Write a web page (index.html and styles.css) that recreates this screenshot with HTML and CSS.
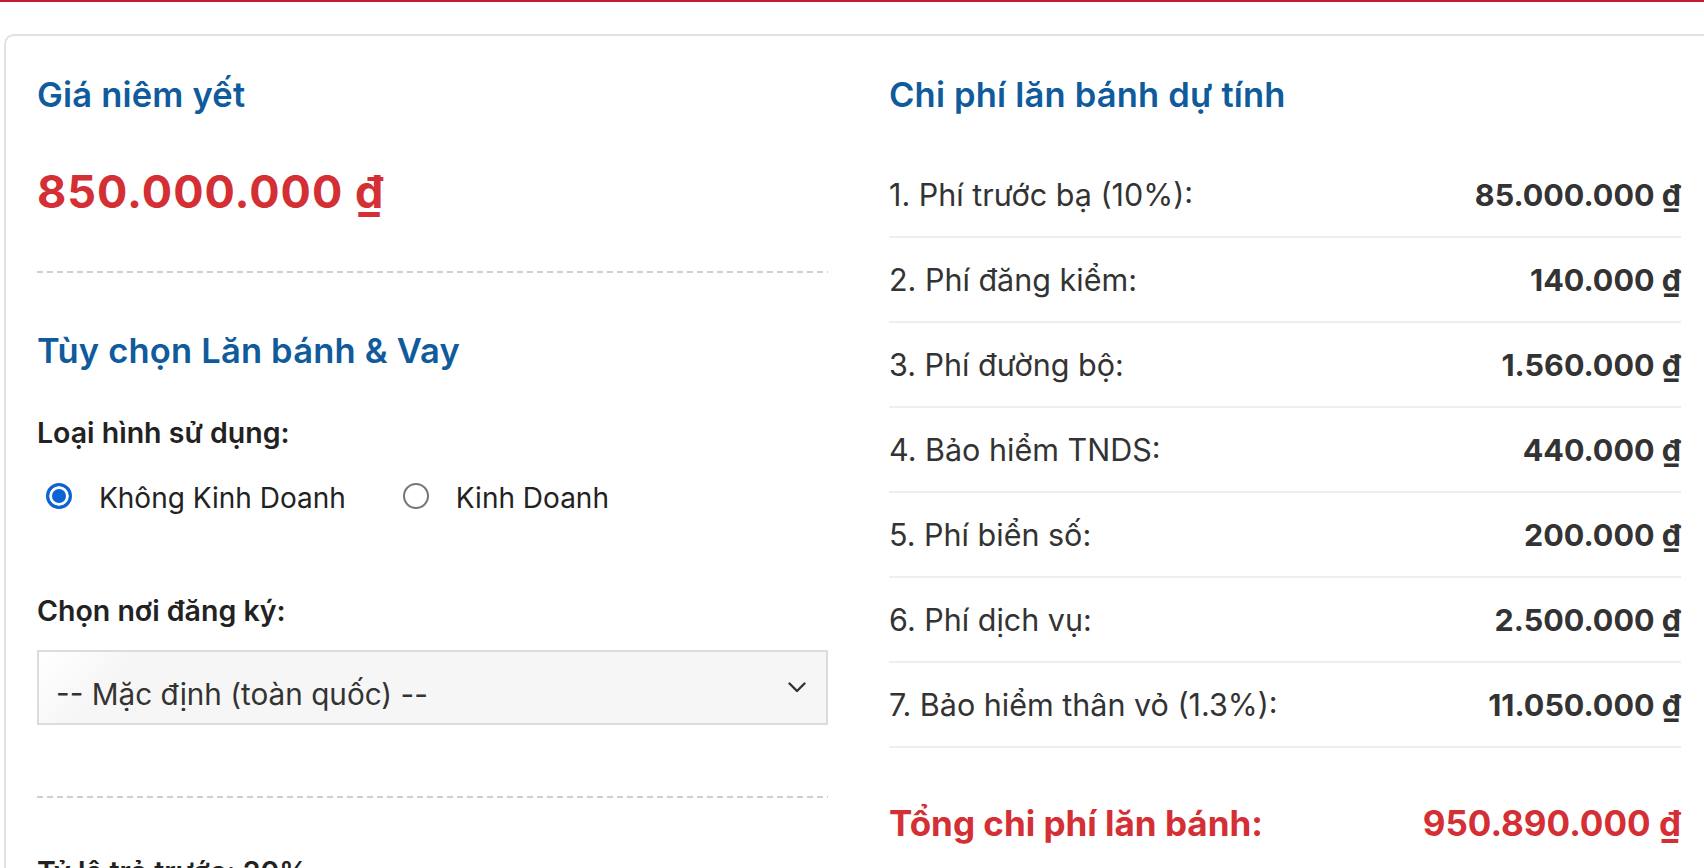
FILE: index.html
```html
<!DOCTYPE html>
<html lang="vi">
<head>
<meta charset="utf-8">
<title>Dự toán chi phí lăn bánh</title>
<link rel="stylesheet" href="styles.css">
</head>
<body>
<div class="topbar"></div>
<main class="card">
  <section class="col">
    <h2 class="title">Giá niêm yết</h2>
    <div class="price">850.000.000 ₫</div>
    <hr class="dash">
    <h2 class="title t2">Tùy chọn Lăn bánh &amp; Vay</h2>
    <p class="label">Loại hình sử dụng:</p>
    <div class="radios">
      <label class="radio"><input type="radio" name="use" checked><span>Không Kinh Doanh</span></label>
      <label class="radio"><input type="radio" name="use"><span>Kinh Doanh</span></label>
    </div>
    <p class="label l2">Chọn nơi đăng ký:</p>
    <div class="select-wrap">
      <select class="select"><option>-- Mặc định (toàn quốc) --</option></select>
      <svg class="chev" width="18" height="11" viewBox="0 0 18 11"><path d="M1.5 1.5 L9 9 L16.5 1.5" fill="none" stroke="#333" stroke-width="2.4" stroke-linecap="round" stroke-linejoin="round"/></svg>
    </div>
    <hr class="dash d2">
    <p class="label l3">Tỷ lệ trả trước: 20%</p>
  </section>
  <section class="col">
    <h2 class="title">Chi phí lăn bánh dự tính</h2>
    <ul class="fees">
      <li><span>1. Phí trước bạ (10%):</span><b>85.000.000 ₫</b></li>
      <li><span>2. Phí đăng kiểm:</span><b>140.000 ₫</b></li>
      <li><span>3. Phí đường bộ:</span><b>1.560.000 ₫</b></li>
      <li><span>4. Bảo hiểm TNDS:</span><b>440.000 ₫</b></li>
      <li><span>5. Phí biển số:</span><b>200.000 ₫</b></li>
      <li><span>6. Phí dịch vụ:</span><b>2.500.000 ₫</b></li>
      <li><span>7. Bảo hiểm thân vỏ (1.3%):</span><b>11.050.000 ₫</b></li>
    </ul>
    <div class="total"><span>Tổng chi phí lăn bánh:</span><span>950.890.000 ₫</span></div>
  </section>
</main>
</body>
</html>
```

FILE: styles.css
```css
html, body {
  margin: 0;
  padding: 0;
  background: #fff;
  overflow: hidden;
}
body {
  font-family: Inter, "Noto Sans", "Liberation Sans", sans-serif;
  color: #333;
}
.topbar {
  height: 2px;
  background: #c41a33;
}
.card {
  margin: 32px 0 0 4px;
  width: 1644px;
  padding: 40px 31px;
  border: 2px solid #e2e2e2;
  border-radius: 10px;
  display: grid;
  grid-template-columns: 791px 792px;
  column-gap: 61px;
  align-items: start;
}
.col {
  min-width: 0;
}
.title {
  margin: 2px 0 0;
  font-weight: 600;
  font-size: 34.5px;
  line-height: 33px;
  letter-spacing: 0.2px;
  color: #0f5b9c;
}
.price {
  margin-top: 54px;
  font-weight: 700;
  font-size: 45px;
  line-height: 54px;
  color: #d32f34;
  letter-spacing: 1px;
}
.dash {
  margin: 52px 0 0;
  border: 0;
  height: 2px;
  background: repeating-linear-gradient(to right, #cfcfcf 0 6px, transparent 6px 10px);
}
.t2 {
  margin-top: 61px;
}
.label {
  margin: 44px 0 0;
  font-weight: 600;
  font-size: 28.5px;
  line-height: 43.5px;
  color: #222;
}
.radios {
  display: flex;
  gap: 48px;
  margin-top: 22px;
  font-size: 28px;
  line-height: 43.5px;
  color: #222;
}
.radio {
  display: flex;
  align-items: center;
  gap: 27px;
}
.radio input {
  appearance: none;
  -webkit-appearance: none;
  width: 26px;
  height: 26px;
  margin: 0 0 4px 9px;
  border: 2px solid #767676;
  border-radius: 50%;
  background: #fff;
  box-sizing: border-box;
}
.radio input:checked {
  border: 3px solid #0d63d4;
  background: #0d63d4;
  box-shadow: inset 0 0 0 3px #fff;
}
.l2 {
  margin-top: 69px;
}
.select-wrap {
  position: relative;
  margin-top: 17px;
  height: 75px;
}
.select {
  appearance: none;
  -webkit-appearance: none;
  display: block;
  width: 100%;
  height: 75px;
  box-sizing: border-box;
  border: 2px solid #dcdcdc;
  border-radius: 0;
  background: linear-gradient(135deg, #ffffff 0%, #f6f6f6 12%, #f6f6f6 100%);
  font-family: Inter, "Noto Sans", sans-serif;
  font-size: 29.7px;
  color: #333;
  padding: 14px 17px 0 17px;
  outline: none;
}
.chev {
  position: absolute;
  right: 22px;
  top: 32px;
  pointer-events: none;
}
.d2 {
  margin-top: 71px;
}
.l3 {
  margin-top: 52px;
}
.fees {
  list-style: none;
  margin: 42px 0 0;
  padding: 0;
}
.fees li {
  display: flex;
  justify-content: space-between;
  padding: 20.5px 0;
  line-height: 42px;
  font-size: 30.5px;
  border-bottom: 2px solid #eeeeee;
  color: #333;
}
.fees b {
  font-weight: 700;
  color: #333;
}
.total {
  display: flex;
  justify-content: space-between;
  margin-top: 54px;
  font-weight: 700;
  font-size: 35px;
  line-height: 42px;
  color: #d32f34;
}
```
